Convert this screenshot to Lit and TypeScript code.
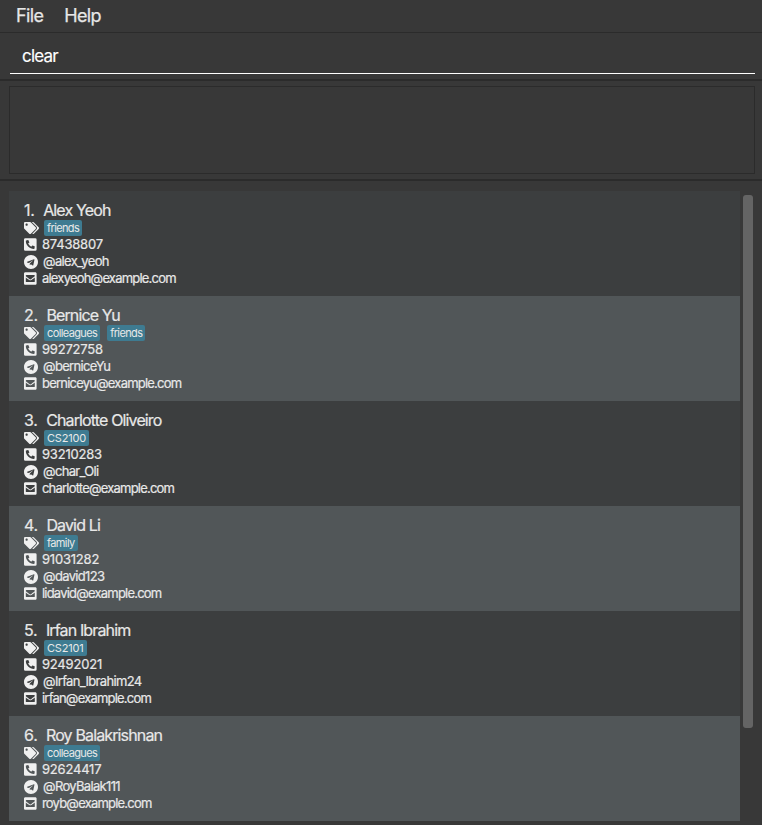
import { LitElement, html, css, svg } from "lit";
import { customElement, property } from "lit/decorators.js";
import { classMap } from "lit/directives/class-map.js";

interface Person {
  name: string;
  tags: string[];
  phone: string;
  handle: string;
  email: string;
}

const PEOPLE: Person[] = [
  { name: "Alex Yeoh", tags: ["friends"], phone: "87438807", handle: "@alex_yeoh", email: "alexyeoh@example.com" },
  { name: "Bernice Yu", tags: ["colleagues", "friends"], phone: "99272758", handle: "@berniceYu", email: "berniceyu@example.com" },
  { name: "Charlotte Oliveiro", tags: ["CS2100"], phone: "93210283", handle: "@char_Oli", email: "charlotte@example.com" },
  { name: "David Li", tags: ["family"], phone: "91031282", handle: "@david123", email: "lidavid@example.com" },
  { name: "Irfan Ibrahim", tags: ["CS2101"], phone: "92492021", handle: "@Irfan_Ibrahim24", email: "irfan@example.com" },
  { name: "Roy Balakrishnan", tags: ["colleagues"], phone: "92624417", handle: "@RoyBalak111", email: "royb@example.com" },
];

const TAGS = svg`<path d="M497.941 225.941L286.059 14.059A48 48 0 0 0 252.118 0H48C21.49 0 0 21.49 0 48v204.118a48 48 0 0 0 14.059 33.941l211.882 211.882c18.744 18.745 49.136 18.746 67.882 0l204.118-204.118c18.745-18.745 18.745-49.137 0-67.882zM112 160c-26.51 0-48-21.49-48-48s21.49-48 48-48 48 21.49 48 48-21.49 48-48 48zm513.941 133.823L421.823 497.941c-18.745 18.745-49.137 18.745-67.882 0l-.36-.36L527.64 323.522c16.999-16.999 26.36-39.6 26.36-63.64s-9.362-46.641-26.36-63.64L331.397 0h48.721a48 48 0 0 1 33.941 14.059l211.882 211.882c18.745 18.745 18.745 49.137 0 67.882z"/>`;
const PHONE = svg`<path d="M400 32H48A48 48 0 0 0 0 80v352a48 48 0 0 0 48 48h352a48 48 0 0 0 48-48V80a48 48 0 0 0-48-48zm-16.39 307.37l-15 65A15 15 0 0 1 354 416C194 416 64 286.29 64 126a15.7 15.7 0 0 1 11.63-14.61l65-15A18.23 18.23 0 0 1 144 96a16.27 16.27 0 0 1 13.79 9.09l30 70A17.9 17.9 0 0 1 189 181a17 17 0 0 1-5.5 11.61l-37.89 31a231.91 231.91 0 0 0 110.78 110.78l31-37.89A17 17 0 0 1 299 291a17.85 17.85 0 0 1 5.91 1.21l70 30A16.25 16.25 0 0 1 384 336a17.41 17.41 0 0 1-.39 3.37z"/>`;
const TELEGRAM = svg`<path d="M248 8C111 8 0 119 0 256s111 248 248 248 248-111 248-248S385 8 248 8zm121.8 169.9l-40.7 191.8c-3 13.6-11.1 16.9-22.4 10.5l-62-45.7-29.9 28.8c-3.3 3.3-6.1 6.1-12.5 6.1l4.4-63.1 114.9-103.8c5-4.4-1.1-6.9-7.7-2.5l-142 89.4-61.2-19.1c-13.3-4.2-13.6-13.3 2.8-19.7l239.1-92.2c11.1-4 20.8 2.7 17.2 19.5z"/>`;
const MAIL = svg`<path d="M400 32H48C21.49 32 0 53.49 0 80v352c0 26.51 21.49 48 48 48h352c26.51 0 48-21.49 48-48V80c0-26.51-21.49-48-48-48zM178.117 262.104C87.429 196.287 88.353 196.121 64 177.167V152c0-13.255 10.745-24 24-24h272c13.255 0 24 10.745 24 24v25.167c-24.371 18.969-23.434 19.124-114.117 84.938-10.5 7.655-31.392 26.12-45.883 25.894-14.503.218-35.367-18.227-45.883-25.895zM384 217.775V360c0 13.255-10.745 24-24 24H88c-13.255 0-24-10.745-24-24V217.775c13.958 10.794 33.329 25.236 95.303 70.214 14.162 10.341 37.975 32.145 64.697 32.01 26.887.134 51.036-22.041 64.72-32.025 61.958-44.964 81.325-59.406 95.28-70.199z"/>`;

@customElement("person-card")
export class PersonCard extends LitElement {
  @property({ attribute: false }) person!: Person;
  @property({ type: Number }) index = 1;

  static styles = css`
    :host {
      display: block;
      box-sizing: border-box;
      height: 105px;
      padding: 10px 15px 0;
      color: #e8e8e8;
      -webkit-text-stroke: 0.2px currentColor;
    }
    .heading {
      display: flex;
      gap: 8.5px;
      height: 19px;
      line-height: 19px;
      font-size: 16px;
      letter-spacing: -0.25px;
      white-space: nowrap;
    }
    .name {
      letter-spacing: -0.86px;
    }
    .tags {
      display: flex;
      align-items: center;
      height: 16px;
      gap: 7px;
    }
    .tag {
      height: 16px;
      line-height: 16px;
      padding: 0 3px;
      border-radius: 2px;
      background: #3e7b91;
      font-size: 11px;
      letter-spacing: -0.62px;
      -webkit-text-stroke-width: 0;
    }
    .code {
      letter-spacing: -0.2px;
    }
    .line {
      display: flex;
      align-items: center;
      height: 17px;
      line-height: 17px;
      font-size: 13px;
    }
    .phone {
      letter-spacing: -0.2px;
    }
    .handle {
      letter-spacing: -0.66px;
    }
    .email {
      letter-spacing: -0.79px;
    }
    svg {
      display: block;
      flex: none;
      fill: #f0f0f0;
      stroke: none;
    }
    .icon-tags {
      width: 15px;
      height: 12px;
      margin-right: -2px;
    }
    .icon-square {
      width: 12.6px;
      height: 13px;
      margin-right: 5.4px;
    }
    .icon-round {
      width: 14px;
      height: 14px;
      margin-right: 5px;
    }
  `;

  render() {
    const p = this.person;
    return html`
      <div class="heading"><span>${this.index}.</span><span class="name">${p.name}</span></div>
      <div class="tags">
        <svg class="icon-tags" viewBox="0 0 640 512">${TAGS}</svg>
        ${p.tags.map((t) => html`<span class=${classMap({ tag: true, code: /\d/.test(t) })}>${t}</span>`)}
      </div>
      <div class="line phone"><svg class="icon-square" viewBox="0 32 448 448">${PHONE}</svg>${p.phone}</div>
      <div class="line handle"><svg class="icon-round" viewBox="0 8 496 496">${TELEGRAM}</svg>${p.handle}</div>
      <div class="line email"><svg class="icon-square" viewBox="0 32 448 448">${MAIL}</svg>${p.email}</div>
    `;
  }
}

@customElement("app-root")
export class AppRoot extends LitElement {
  static styles = css`
    :host {
      display: flex;
      flex-direction: column;
      height: 825px;
      overflow: hidden;
      background: #383838;
      font-family: Inter, "Liberation Sans", sans-serif;
    }
    .menu {
      display: flex;
      box-sizing: border-box;
      flex: none;
      gap: 21px;
      height: 33px;
      padding-left: 16px;
      border-bottom: 1px solid #2b2b2b;
      color: #e6e6e6;
      font-size: 18px;
      line-height: 32px;
      letter-spacing: -0.65px;
      -webkit-text-stroke: 0.25px currentColor;
    }
    .command {
      box-sizing: border-box;
      flex: none;
      height: 48px;
      padding: 7px 7px 0 10px;
      border-bottom: 2px solid #2b2b2b;
    }
    .field {
      height: 33px;
      padding-left: 12px;
      border-bottom: 1px solid #fff;
      color: #fff;
      font-size: 17px;
      line-height: 33px;
      letter-spacing: -0.8px;
      -webkit-text-stroke: 0.15px currentColor;
    }
    .result {
      box-sizing: border-box;
      flex: none;
      height: 100px;
      padding: 5px 7px 5px 9px;
      border-bottom: 2px solid #2b2b2b;
    }
    .result-box {
      box-sizing: border-box;
      height: 88px;
      border: 1px solid #2b2b2b;
    }
    .people {
      display: flex;
      flex: 1;
      padding: 10px 9px 4px;
      gap: 3px;
    }
    .list {
      width: 731px;
    }
    .odd {
      background: #3c3e3f;
    }
    .even {
      background: #515658;
    }
    .thumb {
      width: 10px;
      height: 533px;
      margin-top: 4px;
      border-radius: 3px;
      background: #646464;
    }
  `;

  render() {
    return html`
      <nav class="menu"><span>File</span><span>Help</span></nav>
      <div class="command"><div class="field">clear</div></div>
      <div class="result"><div class="result-box"></div></div>
      <main class="people">
        <div class="list">
          ${PEOPLE.map(
            (p, i) => html`<person-card class=${i % 2 ? "even" : "odd"} .person=${p} .index=${i + 1}></person-card>`,
          )}
        </div>
        <div class="thumb"></div>
      </main>
    `;
  }
}
